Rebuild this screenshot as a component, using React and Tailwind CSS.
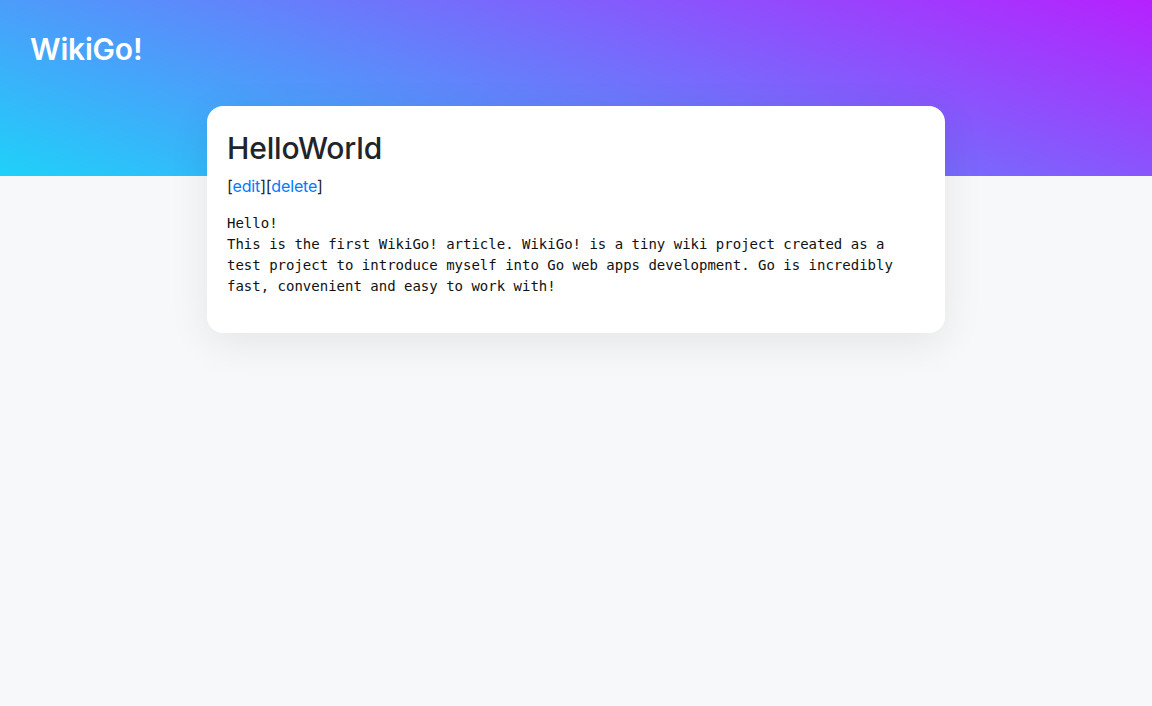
export default function App() {
  return (
    <div className="min-h-screen bg-[#f7f8fa] font-['Inter','Liberation_Sans',Arial,sans-serif]">
      <header className="h-[176px] bg-[linear-gradient(20deg,#1fd1f9,#b621fe)] px-[30px] pt-[31px]">
        <h1 className="text-[30px] leading-[36px] font-semibold tracking-[-0.2px] text-white">WikiGo!</h1>
      </header>
      <main className="mx-auto -mt-[70px] w-[738px] rounded-[16px] bg-white px-[20px] pt-[24px] pb-[36px] shadow-[0_10px_40px_rgba(0,0,0,0.08)]">
        <h1 className="text-[30px] leading-[36px] font-medium tracking-[-0.15px] text-[#212529]">HelloWorld</h1>
        <div className="mt-[7.5px] text-[16px] leading-[24px] tracking-[-0.15px] text-[#212529]">
          [<a href="#" className="text-[#007bff]">edit</a>][<a href="#" className="text-[#007bff]">delete</a>]
        </div>
        <pre className="mt-[15.5px] font-['DejaVu_Sans_Mono',monospace] text-[14px] leading-[21px] text-[#111] whitespace-pre-wrap">
{`Hello!
This is the first WikiGo! article. WikiGo! is a tiny wiki project created as a
test project to introduce myself into Go web apps development. Go is incredibly
fast, convenient and easy to work with!`}
        </pre>
      </main>
    </div>
  );
}
